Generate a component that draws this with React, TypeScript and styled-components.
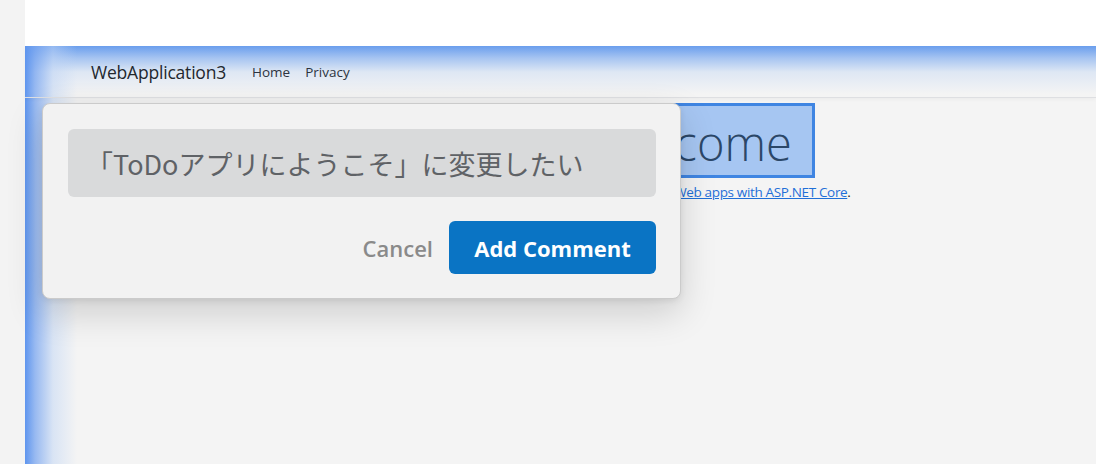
import styled, { createGlobalStyle } from "styled-components";

const GlobalStyle = createGlobalStyle`
  html, body {
    margin: 0;
    padding: 0;
    background: #f3f3f3;
  }
  body {
    font-family: "Open Sans", "Noto Sans", "Noto Sans CJK JP", sans-serif;
  }
`;

export default function App() {
  return (
    <>
      <GlobalStyle />
      <Shell>
        <SideStrip />
        <Column>
          <TopBlank />
          <Page>
            <Navbar>
              <Brand>WebApplication3</Brand>
              <NavLink>Home</NavLink>
              <NavLink>Privacy</NavLink>
            </Navbar>
            <Main>
              <Heading>Welcome</Heading>
              <Lead>
                Learn about <a href="#">building Web apps with ASP.NET Core</a>.
              </Lead>
            </Main>
            <Popup>
              <CommentInput>「ToDoアプリにようこそ」に変更したい</CommentInput>
              <Actions>
                <CancelButton>Cancel</CancelButton>
                <PrimaryButton>Add Comment</PrimaryButton>
              </Actions>
            </Popup>
          </Page>
        </Column>
      </Shell>
    </>
  );
}

const Shell = styled.div`
  display: grid;
  grid-template-columns: 25px 1fr;
  height: 464px;
  overflow: hidden;
`;

const SideStrip = styled.div`
  background: #f3f3f3;
`;

const Column = styled.div`
  display: flex;
  flex-direction: column;
  min-width: 0;
`;

const TopBlank = styled.div`
  height: 46px;
  background: #ffffff;
`;

// blue glow along the top and left edges of the page
const Page = styled.div`
  position: relative;
  flex: 1;
  background:
    linear-gradient(to right, #5e95ee 0, rgba(120, 165, 240, 0.75) 10px, rgba(190, 212, 245, 0.5) 28px, rgba(244, 244, 244, 0) 52px),
    linear-gradient(to bottom, #6a9eed 0, rgba(140, 180, 240, 0.75) 12px, rgba(200, 218, 244, 0.5) 26px, rgba(244, 244, 244, 0) 48px),
    #f4f4f4;
`;

const Navbar = styled.div`
  display: flex;
  align-items: center;
  height: 51px;
  padding-left: 66px;
  border-bottom: 1px solid #dedfe2;
  box-shadow: 0 2px 4px rgba(0, 0, 0, 0.03);
  font-family: "Open Sans", "Noto Sans", sans-serif;
`;

const Brand = styled.span`
  font-size: 17.5px;
  color: #22272e;
  margin-right: 26px;
  letter-spacing: -0.2px;
`;

const NavLink = styled.span`
  font-size: 13.5px;
  color: #2d3440;
  margin-right: 15px;
`;

const Main = styled.div`
  display: flex;
  flex-direction: column;
  align-items: center;
  width: 600px;
  margin-left: 374px;
  padding-top: 5px;
`;

const Heading = styled.h1`
  margin: 0;
  padding: 5px 20px 0 10px;
  font-family: "Open Sans", sans-serif;
  font-weight: 300;
  font-size: 47px;
  line-height: 64px;
  color: #2b4768;
  background: #a6c6f2;
  border: 3px solid #3f85e2;
`;

const Lead = styled.p`
  margin: 5px 0 0;
  font-size: 13.5px;
  color: #222;
  letter-spacing: -0.35px;

  a {
    color: #1f6fd8;
  }
`;

const Popup = styled.div`
  position: absolute;
  left: 17px;
  top: 57px;
  width: 588px;
  padding: 25px 24px 24px 25px;
  background: #f2f2f2;
  border: 1px solid #cbcbcb;
  border-radius: 8px;
  box-shadow: 0 14px 36px rgba(0, 0, 0, 0.16), 0 2px 6px rgba(0, 0, 0, 0.08);
  display: flex;
  flex-direction: column;
  gap: 24px;
`;

const CommentInput = styled.div`
  height: 68px;
  display: flex;
  align-items: center;
  padding-left: 18px;
  background: #d9dadb;
  border-radius: 6px;
  font-family: "Noto Sans CJK JP", "Open Sans", sans-serif;
  font-size: 27px;
  color: #5f6266;
`;

const Actions = styled.div`
  display: flex;
  justify-content: flex-end;
  align-items: center;
  gap: 16px;
`;

const CancelButton = styled.button`
  border: none;
  background: none;
  padding: 0;
  font-family: "Open Sans", sans-serif;
  font-weight: 600;
  font-size: 22px;
  color: #8a8a8a;
`;

const PrimaryButton = styled.button`
  width: 207px;
  height: 53px;
  border: none;
  border-radius: 6px;
  background: #0a74c4;
  color: #ffffff;
  font-family: "Open Sans", sans-serif;
  font-weight: 700;
  font-size: 22px;
`;
